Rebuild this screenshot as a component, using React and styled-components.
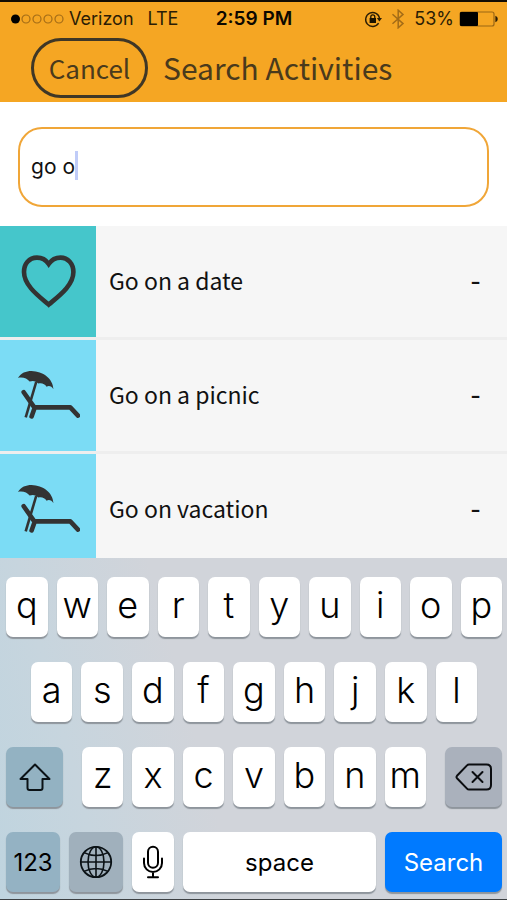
import { useState } from 'react'
import styled, { createGlobalStyle } from 'styled-components'

const ACTIVITIES = [
	{ idx: 1, name: 'Go on a date', icon: 'heart', color: '#45c6cb' },
	{ idx: 2, name: 'Go on a picnic', icon: 'beach', color: '#7bdcf5' },
	{ idx: 3, name: 'Go on vacation', icon: 'beach', color: '#7bdcf5' },
]

const GlobalStyle = createGlobalStyle`
	* {
		box-sizing: border-box;
	}
	body {
		margin: 0;
		font-family: 'Inter', 'Liberation Sans', sans-serif;
		background: #fff;
	}
	button, input {
		margin: 0;
		font-family: inherit;
	}
`

const Page = styled.div`
	display: flex;
	flex-direction: column;
	height: 100vh;
`
const Header = styled.header`
	border-top: 2px solid #120c02;
	background: #f5a623;
`
const StatusBar = styled.div`
	display: grid;
	grid-template-columns: 1fr auto 1fr;
	align-items: center;
	height: 33px;
	padding: 0 9px 0 10px;
	font-size: 18px;
	color: #2b1d05;
`
const StatusSide = styled.div`
	display: flex;
	align-items: center;
	justify-content: ${({ $end }) => ($end ? 'flex-end' : 'flex-start')};
	gap: 5px;
`
const Carrier = styled.span`
	margin-right: 9px;
`
const Time = styled.span`
	font-size: 19px;
	font-weight: 600;
	color: #0d0800;
`
const Bluetooth = styled.svg`
	margin: 0 4px;
	fill: none;
	stroke: #a36c17;
	stroke-width: 1.5;
`
const Nav = styled.div`
	display: flex;
	align-items: center;
	gap: 15px;
	padding: 3px 31px 4px;
	font-family: 'Noto Sans CJK JP', 'Noto Sans', sans-serif;
	color: #4a3a1c;
`
const CancelButton = styled.button`
	width: 117px;
	height: 60px;
	padding: 0 0 2px;
	border: 3px solid #3f3726;
	border-radius: 30px;
	background: transparent;
	font-family: inherit;
	font-size: 26px;
	color: inherit;
`
const Title = styled.h1`
	margin: 0;
	padding-bottom: 2px;
	font-size: 30px;
	line-height: 40px;
	font-weight: 400;
`
const SearchForm = styled.form`
	position: relative;
	padding: 25px 18px 19px;
`
const SearchInput = styled.input`
	display: block;
	width: 100%;
	height: 80px;
	padding: 0 11px 2px;
	border: 2px solid #f0a638;
	border-radius: 24px;
	outline: none;
	background: #fff;
	font-size: 21px;
	color: #111;
`
const Caret = styled.span`
	position: absolute;
	top: 49px;
	left: 75px;
	width: 3px;
	height: 29px;
	background: #c0ccf8;
`
const List = styled.ul`
	display: flex;
	flex: 1;
	flex-direction: column;
	gap: 3px;
	min-height: 0;
	margin: 0;
	padding: 0;
	overflow: hidden;
	list-style: none;
	background: #eee;
`
const Row = styled.li`
	display: flex;
	flex: none;
	align-items: center;
	height: 111px;
	background: #f6f6f6;
	font-size: 23px;
	color: #111;
`
const IconTile = styled.div`
	display: flex;
	align-items: center;
	justify-content: center;
	width: 96px;
	height: 100%;
	background: ${({ $color }) => $color};
`
const Name = styled.span`
	flex: 1;
	padding: 0 0 3px 13px;
	font-family: 'Noto Sans CJK JP', 'Noto Sans', sans-serif;
`
const Score = styled.span`
	padding-right: 26px;
	font-weight: 500;
`
const KeyboardBox = styled.div`
	display: flex;
	flex-direction: column;
	gap: 25px;
	padding: 19px 5px 7px 6px;
	border-bottom: 1px solid #3c4043;
	background: linear-gradient(75deg, #bfd4df 0%, #c7d5de 18%, #d1d4da 40%);
`
const KeyRow = styled.div`
	display: flex;
	gap: 9px;
	padding: 0 ${({ $inset }) => ($inset ? '5%' : '0')};
`
const Letters = styled.div`
	display: flex;
	flex: 1;
	gap: 9px;
	margin: 0 10px;
`
const Key = styled.button`
	display: flex;
	flex: ${({ $grow }) => ($grow ? '1 1 0' : 'none')};
	align-items: center;
	justify-content: center;
	width: ${({ $width }) => $width || 'auto'};
	min-width: 0;
	height: 60px;
	padding: 0;
	border: none;
	border-radius: 7px;
	background: ${({ $bg }) => $bg || '#fff'};
	box-shadow: 0 2px 1px #8e959c;
	font-size: 24px;
	color: ${({ $color }) => $color || '#000'};
`
const LetterKey = styled(Key)`
	flex: 1 1 0;
	padding-bottom: 5px;
	font-size: 36px;
	font-weight: 300;
`

function PhoneStatus() {
	return (
		<StatusBar>
			<StatusSide>
				<svg width="54" height="12" viewBox="0 0 54 12">
					<circle cx="5.5" cy="6" r="4.5" fill="#000" />
					{[16, 27, 38, 49].map(cx => (
						<circle
							key={cx}
							cx={cx}
							cy="6"
							r="4"
							fill="none"
							stroke="#a36c17"
							strokeWidth="1.2"
						/>
					))}
				</svg>
				<Carrier>Verizon</Carrier>
				<span>LTE</span>
			</StatusSide>
			<Time>2:59 PM</Time>
			<StatusSide $end>
				<svg width="18" height="18" viewBox="0 0 18 18">
					<path
						d="M14.6 13.2A7 7 0 1 1 15.6 8.5"
						fill="none"
						stroke="#2b1d05"
						strokeWidth="1.4"
					/>
					<path d="M12.8 8h5.2l-2.6 3.4z" fill="#2b1d05" />
					<rect x="5.6" y="8" width="6.4" height="5" fill="#1a1200" />
					<path
						d="M6.8 8.4V6.8a2 2 0 0 1 4 0v1.6"
						fill="none"
						stroke="#1a1200"
						strokeWidth="1.3"
					/>
				</svg>
				<Bluetooth width="14" height="20" viewBox="0 0 14 20">
					<path d="M1.5 5.2 12 14.6 7.2 18.8V1.2L12 5.4 1.5 14.8" />
				</Bluetooth>
				<span>53%</span>
				<svg width="39" height="16" viewBox="0 0 39 16">
					<rect
						x="1"
						y="1"
						width="34"
						height="14"
						rx="2"
						fill="none"
						stroke="#9a6615"
						strokeWidth="1.2"
					/>
					<rect x="1" y="1" width="18" height="14" rx="1" fill="#000" />
					<path d="M36.4 4.8q2.4 1 2.4 3.2t-2.4 3.2z" fill="#2b1d05" />
				</svg>
			</StatusSide>
		</StatusBar>
	)
}

function HeartIcon() {
	return (
		<svg width="64" height="64" viewBox="0 0 64 64">
			<path
				d="M32.7 14C30 10 25.5 7.6 21 7.6 13 7.6 8 14 8 22 8 36 24 47 32.7 54.6 41.5 47 57.4 36 57.4 22 57.4 14 52 7.6 44.5 7.6 40 7.6 35.5 10 32.7 14Z"
				fill="none"
				stroke="#333"
				strokeWidth="4.6"
			/>
		</svg>
	)
}

function BeachIcon() {
	return (
		<svg width="64" height="64" viewBox="0 0 64 64" fill="none" stroke="#333">
			<path
				d="M2 13.9C5 9 10 7 15.5 7 27 7.4 37 14.5 37.4 25.2 35.8 22.6 33 21.2 30.6 22.8 29 20 25.5 18.6 22.4 19.6 19.5 16.6 16.5 16.4 13.6 17.6 11.5 14.2 6 12.6 2 13.9Z"
				fill="#333"
				stroke="none"
			/>
			<path d="M20.2 18 9.7 53.3" strokeWidth="2.6" />
			<path
				d="M7.7 28.2 18.3 43.4H54.3L62 51.6M18.6 44 15.6 52.4"
				strokeWidth="4.6"
				strokeLinecap="round"
				strokeLinejoin="round"
			/>
		</svg>
	)
}

function ActivityRow({ activity }) {
	return (
		<Row>
			<IconTile $color={activity.color}>
				{activity.icon === 'heart' ? <HeartIcon /> : <BeachIcon />}
			</IconTile>
			<Name>{activity.name}</Name>
			<Score>-</Score>
		</Row>
	)
}

function Keyboard({ onPressKey, onDelete }) {
	const renderLetters = letters =>
		letters.split('').map(letter => (
			<LetterKey key={letter} type="button" onClick={() => onPressKey(letter)}>
				{letter}
			</LetterKey>
		))

	return (
		<KeyboardBox>
			<KeyRow>{renderLetters('qwertyuiop')}</KeyRow>
			<KeyRow $inset>{renderLetters('asdfghjkl')}</KeyRow>
			<KeyRow>
				<Key type="button" $width="57px" $bg="#93b2c2" aria-label="Shift">
					<svg width="34" height="30" viewBox="0 0 34 30">
						<path
							d="M17 2.5 31.5 17H24.5V26Q24.5 28 22.5 28H11.5Q9.5 28 9.5 26V17H2.5Z"
							fill="none"
							stroke="#0b1216"
							strokeWidth="2"
							strokeLinejoin="round"
						/>
					</svg>
				</Key>
				<Letters>{renderLetters('zxcvbnm')}</Letters>
				<Key
					type="button"
					$width="57px"
					$bg="#aab1bc"
					aria-label="Delete"
					onClick={onDelete}
				>
					<svg width="38" height="28" viewBox="0 0 38 28">
						<g
							fill="none"
							stroke="#0b0d10"
							strokeWidth="2"
							strokeLinejoin="round"
							strokeLinecap="round"
						>
							<path d="M14 1.5H31.5Q36 1.5 36 6V22Q36 26.5 31.5 26.5H14Q12.8 26.5 12 25.6L2 15.2Q1 14 2 12.8L12 2.4Q12.8 1.5 14 1.5Z" />
							<path d="M17.5 9 27.5 19M27.5 9 17.5 19" />
						</g>
					</svg>
				</Key>
			</KeyRow>
			<KeyRow>
				<Key type="button" $width="54px" $bg="#94b2c3">
					123
				</Key>
				<Key type="button" $width="54px" $bg="#a0b0bc" aria-label="Next keyboard">
					<svg
						width="34"
						height="34"
						viewBox="0 0 34 34"
						fill="none"
						stroke="#0b1216"
						strokeWidth="1.6"
					>
						<circle cx="17" cy="17" r="15.2" strokeWidth="1.8" />
						<ellipse cx="17" cy="17" rx="8" ry="15.2" />
						<path d="M17 1.8V32.2M1.8 17H32.2M5 7.6Q17 13.5 29 7.6M5 26.4Q17 20.5 29 26.4" />
					</svg>
				</Key>
				<Key type="button" $width="42px" aria-label="Dictation">
					<svg
						width="22"
						height="34"
						viewBox="0 0 22 34"
						fill="none"
						stroke="#000"
						strokeWidth="2"
						strokeLinecap="round"
					>
						<rect x="6" y="1.8" width="10" height="21" rx="5" />
						<path d="M2 13.5V18A9 9 0 0 0 20 18V13.5M11 27V32M6 32.2H16" />
					</svg>
				</Key>
				<Key type="button" $grow onClick={() => onPressKey(' ')}>
					space
				</Key>
				<Key type="button" $width="117px" $bg="#007aff" $color="#fff">
					Search
				</Key>
			</KeyRow>
		</KeyboardBox>
	)
}

function App() {
	const [keyword, setKeyword] = useState('go o')

	const onPressKey = key => setKeyword(prev => prev + key)
	const onDelete = () => setKeyword(prev => prev.slice(0, -1))

	return (
		<Page>
			<GlobalStyle />
			<Header>
				<PhoneStatus />
				<Nav>
					<CancelButton type="button">Cancel</CancelButton>
					<Title>Search Activities</Title>
				</Nav>
			</Header>
			<SearchForm onSubmit={e => e.preventDefault()}>
				<SearchInput
					type="text"
					aria-label="Search Activities"
					value={keyword}
					onChange={e => setKeyword(e.target.value)}
				/>
				{keyword === 'go o' && <Caret />}
			</SearchForm>
			<List>
				{ACTIVITIES.map(activity => (
					<ActivityRow key={activity.idx} activity={activity} />
				))}
			</List>
			<Keyboard onPressKey={onPressKey} onDelete={onDelete} />
		</Page>
	)
}

export default App
